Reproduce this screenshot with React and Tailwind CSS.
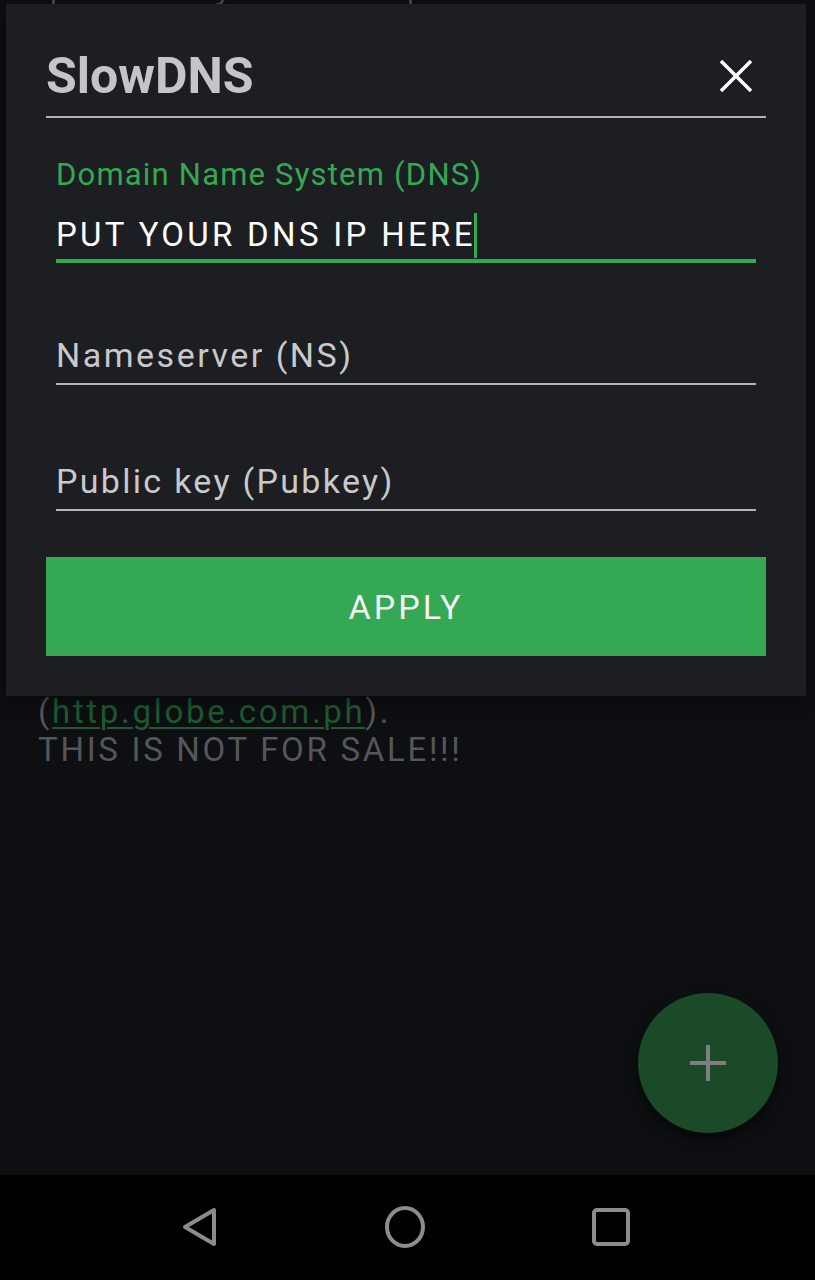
import React from "react";

const roboto = { fontFamily: "Roboto, 'Liberation Sans', sans-serif" };

export default function App() {
  return (
    <div className="relative w-[815px] h-[1280px] overflow-hidden flex flex-col bg-black" style={roboto}>
      {/* background activity */}
      <div className="flex-1 bg-[#0d0f12] flex flex-col">
        <div className="flex items-start h-[6px] overflow-hidden">
          <div className="flex items-end -mt-[34px] h-[40px] pl-[52px] gap-[36px] text-[#4a4c50] text-[36px] leading-[40px] tracking-[2px]">
            <span className="w-[3px] h-[40px] bg-[#4a4c50]" />
            <span>Use Payload</span>
            <span className="w-[3px] h-[40px] bg-[#4a4c50] ml-[62px]" />
            <span>SNI</span>
          </div>
        </div>
        <div className="pt-[687px] px-[38px] text-[33px] leading-[38px] tracking-[2.7px] text-[#555658]">
          <div>
            (<span className="text-[#1d5a30] underline decoration-[2px] underline-offset-[4px]">http.globe.com.ph</span>).
          </div>
          <div>THIS IS NOT FOR SALE!!!</div>
        </div>
      </div>

      {/* navigation bar */}
      <div className="h-[105px] bg-black flex items-center justify-center shrink-0">
        <div className="flex items-center w-[446px] justify-between -mt-[2px] pl-[2px]">
          <svg width="38" height="40" viewBox="0 0 38 40" fill="none" className="-ml-[6px]">
            <path d="M33 3 L33 37 L4 20 Z" stroke="#8c8c8c" strokeWidth="4" strokeLinejoin="round" />
          </svg>
          <svg width="42" height="42" viewBox="0 0 42 42" fill="none">
            <ellipse cx="21" cy="21" rx="18" ry="19" stroke="#8c8c8c" strokeWidth="4" />
          </svg>
          <svg width="40" height="40" viewBox="0 0 40 40" fill="none">
            <rect x="3" y="3" width="34" height="34" rx="3" stroke="#8c8c8c" strokeWidth="4" />
          </svg>
        </div>
      </div>

      {/* FAB */}
      <div className="absolute left-[638px] top-[993px] w-[140px] h-[140px] rounded-full bg-[#1a4a27] shadow-[0_6px_14px_rgba(0,0,0,0.6)] flex items-center justify-center">
        <svg width="38" height="38" viewBox="0 0 38 38">
          <path d="M19 1 V37 M1 19 H37" stroke="#7e7e7e" strokeWidth="4" />
        </svg>
      </div>

      {/* dialog */}
      <div className="absolute left-[6px] top-[4px] w-[800px] bg-[#1c1e22] pt-[44px] px-[40px] pb-[40px] shadow-[0_4px_16px_rgba(0,0,0,0.5)]">
        <div className="flex items-center justify-between h-[56px]">
          <div className="text-[50px] font-bold leading-[56px] text-[#c4c5c7]">SlowDNS</div>
          <svg width="34" height="34" viewBox="0 0 34 34" className="mr-[13px]">
            <path d="M2 2 L32 32 M32 2 L2 32" stroke="#ffffff" strokeWidth="3.5" />
          </svg>
        </div>
        <div className="mt-[12px] h-[2px] bg-[#b4b4b6]" />

        <div className="px-[10px]">
          <div className="mt-[39px] text-[31px] leading-[36px] tracking-[1.2px] text-[#34a853]">
            Domain Name System (DNS)
          </div>
          <div className="mt-[22px] h-[40px] flex items-center">
            <span className="text-[33px] leading-[40px] tracking-[3.3px] text-white">PUT YOUR DNS IP HERE</span>
            <span className="w-[3px] h-[45px] bg-[#34a853] -ml-[2px]" />
          </div>
          <div className="mt-[4px] h-[4px] bg-[#34a853]" />

          <div className="mt-[72px] text-[34px] leading-[40px] tracking-[2.5px] text-[#c8c9cb]">Nameserver (NS)</div>
          <div className="mt-[8px] h-[2px] bg-[#b4b4b6]" />

          <div className="mt-[76px] text-[34px] leading-[40px] tracking-[2.3px] text-[#c8c9cb]">Public key (Pubkey)</div>
          <div className="mt-[8px] h-[2px] bg-[#b4b4b6]" />
        </div>

        <div className="mt-[46px] h-[99px] bg-[#34a853] flex items-center justify-center">
          <span className="text-[34px] tracking-[3px] text-[#f4f4f4] leading-[40px]">APPLY</span>
        </div>
      </div>
    </div>
  );
}
